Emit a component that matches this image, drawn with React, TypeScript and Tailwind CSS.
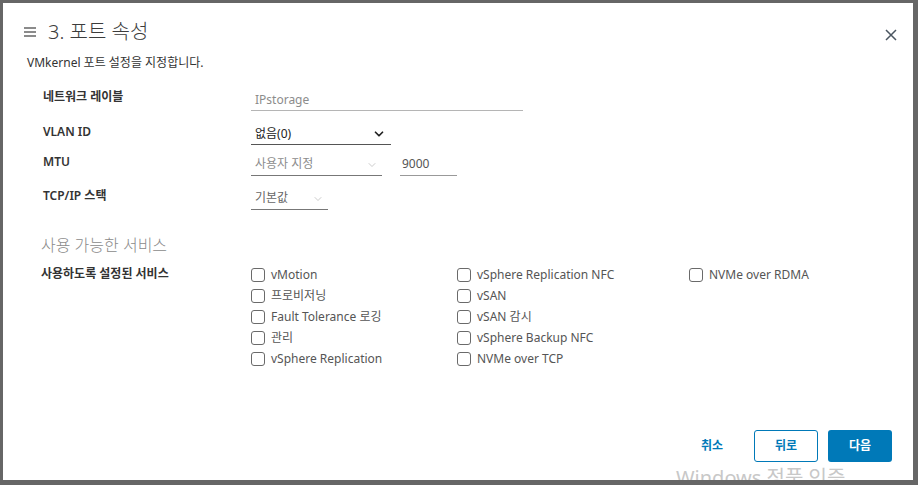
import { ChevronDown } from "lucide-react";

const font = { fontFamily: '"Noto Sans", "Noto Sans CJK KR", sans-serif' };

type Svc = { name: string };

const col1: Svc[] = [{ name: "vMotion" }, { name: "프로비저닝" }, { name: "Fault Tolerance 로깅" }, { name: "관리" }, { name: "vSphere Replication" }];
const col2: Svc[] = [{ name: "vSphere Replication NFC" }, { name: "vSAN" }, { name: "vSAN 감시" }, { name: "vSphere Backup NFC" }, { name: "NVMe over TCP" }];
const col3: Svc[] = [{ name: "NVMe over RDMA" }];

function Check({ name }: Svc) {
  return (
    <label className="flex items-center h-[21px] gap-[6px] text-[12px] text-[#555]">
      <span className="w-[14px] h-[14px] rounded-[3px] border border-[#6a6a6a] bg-white shrink-0" />
      <span>{name}</span>
    </label>
  );
}

function Label({ children }: { children: React.ReactNode }) {
  return <div className="w-[208px] h-4 leading-4 text-[12px] font-semibold text-[#333]">{children}</div>;
}

export default function App() {
  return (
    <div className="w-[918px] h-[485px] bg-[#666] pt-[3px] pl-[3px]" style={font}>
      <div className="relative w-[910px] h-[477px] bg-white overflow-hidden flex flex-col">
        {/* header */}
        <div className="flex items-center h-[30px] mt-[14px] pl-[21px] pr-[16px]">
          <svg width="12" height="10" viewBox="0 0 12 10" className="text-[#666]">
            <path d="M0 1h12M0 5h12M0 9h12" stroke="currentColor" strokeWidth="1.4" />
          </svg>
          <div className="ml-[12px] text-[20px] leading-[30px] text-[#3c3c3c] font-light">3. 포트 속성</div>
          <svg width="12" height="12" viewBox="0 0 12 12" className="ml-auto mt-[6px] text-[#4a5560]">
            <path d="M1 1l10 10M11 1L1 11" stroke="currentColor" strokeWidth="1.5" />
          </svg>
        </div>
        <div className="pl-[24px] mt-[8px] h-4 leading-4 text-[12px] text-[#333]">VMkernel 포트 설정을 지정합니다.</div>

        {/* form */}
        <div className="pl-[40px] mt-[18px] flex flex-col">
          <div className="flex">
            <Label>네트워크 레이블</Label>
            <div className="w-[272px] h-[21px] mt-[1px] border-b border-[#b5b5b5] text-[12px] leading-5 text-[#8c8c8c] pl-[4px]">IPstorage</div>
          </div>
          <div className="flex mt-[13px]">
            <Label>VLAN ID</Label>
            <div className="w-[140px] h-[21px] border-b border-[#555] text-[12px] leading-5 text-[#222] pl-[4px] flex items-center">
              <span>없음(0)</span>
              <ChevronDown size={14} strokeWidth={3} className="ml-auto mr-[5px] text-[#222]" />
            </div>
          </div>
          <div className="flex mt-[9px]">
            <Label>MTU</Label>
            <div className="w-[131px] h-[22px] border-b border-[#777] text-[12px] leading-5 text-[#8c8c8c] pl-[4px] flex items-start">
              <span>사용자 지정</span>
              <ChevronDown size={12} strokeWidth={1.2} className="ml-auto mr-[4px] mt-[5px] text-[#aaa]" />
            </div>
            <div className="w-[57px] h-[22px] ml-[18px] border-b border-[#999] text-[12px] leading-5 text-[#555] pl-[2px]">9000</div>
          </div>
          <div className="flex mt-[12px]">
            <Label>TCP/IP 스택</Label>
            <div className="w-[77px] h-[22px] border-b border-[#777] text-[12px] leading-5 text-[#666] pl-[4px] flex items-start">
              <span>기본값</span>
              <ChevronDown size={12} strokeWidth={1.2} className="ml-auto mr-[4px] mt-[5px] text-[#aaa]" />
            </div>
          </div>
        </div>

        {/* services */}
        <div className="pl-[38px] mt-[24px] h-[22px] leading-[22px] text-[16px] text-[#8a8a8a] font-light">사용 가능한 서비스</div>
        <div className="pl-[38px] mt-[8px] flex">
          <div className="w-[210px] pt-[2px] h-4 leading-4 text-[12px] font-semibold text-[#333]">사용하도록 설정된 서비스</div>
          <div className="w-[206px] flex flex-col">
            {col1.map((s) => <Check key={s.name} {...s} />)}
          </div>
          <div className="w-[232px] flex flex-col">
            {col2.map((s) => <Check key={s.name} {...s} />)}
          </div>
          <div className="flex flex-col">
            {col3.map((s) => <Check key={s.name} {...s} />)}
          </div>
        </div>

        {/* footer */}
        <div className="mt-auto mb-[18px] pr-[21px] flex justify-end gap-[10px]">
          <button className="w-[64px] h-[32px] text-[12px] font-bold text-[#0079b8]">취소</button>
          <button className="w-[64px] h-[32px] rounded-[3px] border border-[#0079b8] text-[12px] font-bold text-[#0079b8] bg-white">뒤로</button>
          <button className="w-[64px] h-[32px] rounded-[3px] bg-[#0079b8] text-[12px] font-bold text-white">다음</button>
        </div>

        <div className="absolute left-[673px] top-[463px] text-[20px] leading-[24px] text-[#c8c8c8] whitespace-nowrap">Windows 정품 인증</div>
      </div>
    </div>
  );
}
